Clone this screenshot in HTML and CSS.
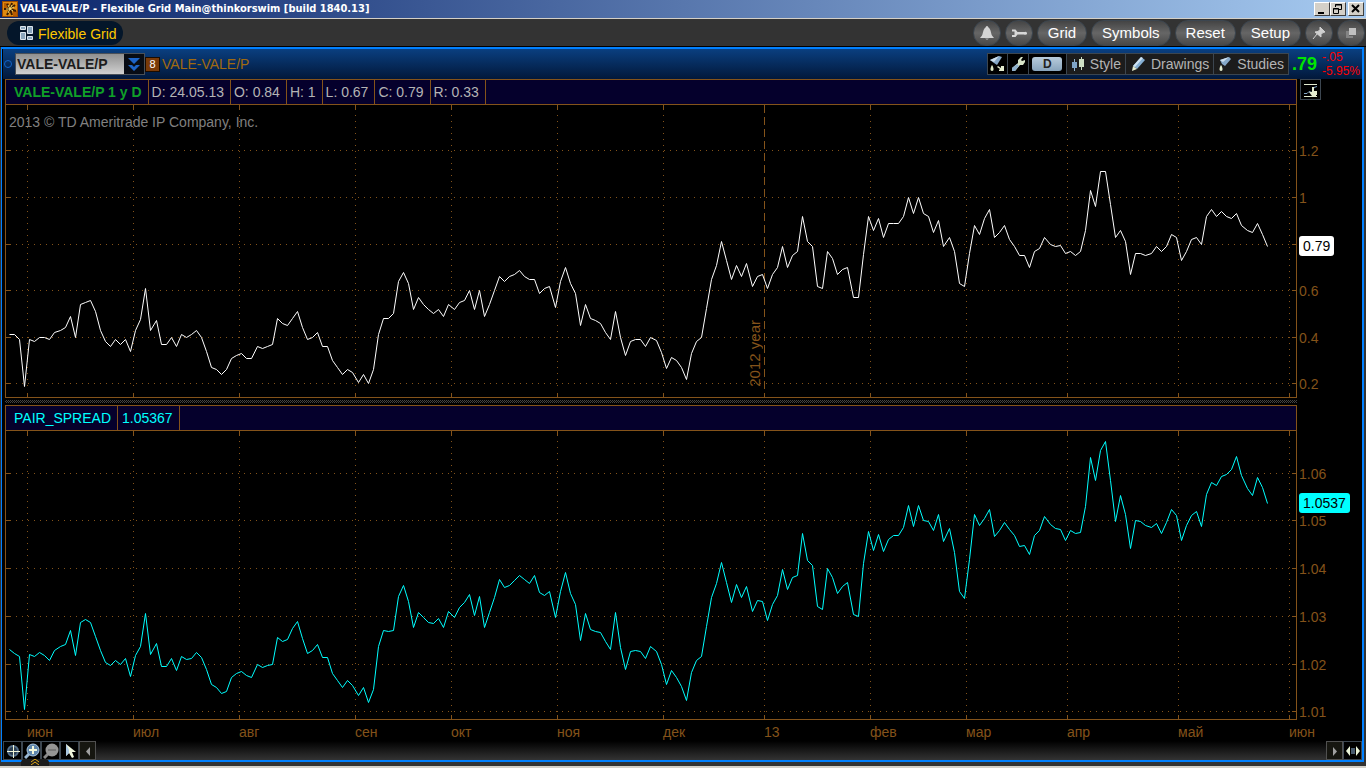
FILE: index.html
```
<!DOCTYPE html>
<html lang="en">
<head>
<meta charset="utf-8">
<title>VALE-VALE/P - Flexible Grid</title>
<link rel="stylesheet" href="styles.css">
</head>
<body>
<header class="titlebar">
  <svg class="app-icon" viewBox="0 0 16 16" width="16" height="16" aria-hidden="true"><rect width="16" height="16" fill="#9a4a00"/><rect x="1" y="1" width="14" height="14" fill="#e08a10"/><path d="M2 2h5v5H2zM11 10h4v5h-4z" fill="#b85c00"/><path d="M8 8L5 3M8 8l2-6M8 8l5-4M8 8l6 2M8 8l2 6M8 8l-3 6M8 8H2" stroke="#3a1c00" stroke-width="2"/><path d="M8 8L6 4M8 8l2-4M8 8l4-2M8 8l3 2M8 8l-2 4M8 8H4" stroke="#ffe070"/></svg>
  <h1 class="title">VALE-VALE/P - Flexible Grid Main@thinkorswim [build 1840.13]</h1>
  <div class="window-buttons">
    <button class="win" aria-label="Minimize"><svg viewBox="0 0 14 12" width="14" height="12"><path d="M3 9h6v2H3z"/></svg></button>
    <button class="win" aria-label="Restore"><svg viewBox="0 0 14 12" width="14" height="12"><path fill="none" stroke="#000" d="M4.500 4V1.500h6v5H8M4 2h7M2.500 5.500h5v5h-5zM2 6h6"/></svg></button>
    <button class="win win-close" aria-label="Close"><svg viewBox="0 0 14 12" width="14" height="12"><path fill="none" stroke="#000" stroke-width="2" d="M3 2l7 7M10 2l-7 7"/></svg></button>
  </div>
</header>

<nav class="toolbar">
  <button class="tab">
    <svg viewBox="0 0 14 15" width="14" height="15" aria-hidden="true"><g fill="#8ba6bd" stroke="#dce6ee"><path d="M.5.5h5v3h-5zM.5 6.500h5v7h-5zM7.500.5h5v7h-5zM7.500 10.500h5v3h-5z"/></g></svg>
    Flexible Grid
  </button>
  <div class="pills">
    <button class="pill round" aria-label="Alerts"><svg viewBox="0 0 16 16" width="16" height="16"><path d="M8 1c1 0 1 1 1.500 1.500C12 4 12 9 13 10.500l2 2.500H1l2-2.500C4 9 4 4 6.500 2.500 7 2 7 1 8 1z" fill="#d4d4d4"/><path d="M6 13.500h4L8 15z" fill="#aaa"/></svg></button>
    <button class="pill round" aria-label="Tools"><svg viewBox="0 0 18 10" width="18" height="10"><path d="M2 1.500h3.500L7.500 4H15v2.500H7.500L5.500 9H2V7h2.500V3.500H2z" fill="#d8d8d8"/><circle cx="15.500" cy="5.200" r="1.500" fill="#d8d8d8"/></svg></button>
    <button class="pill">Grid</button>
    <button class="pill">Symbols</button>
    <button class="pill">Reset</button>
    <button class="pill">Setup</button>
    <button class="pill round" aria-label="Pin"><svg viewBox="0 0 14 14" width="14" height="14"><path d="M8 1l5 5-2 .5-2 2v2.500L3 6l3-.5 2-2zM5 8L1 13" fill="#d0d0d0" stroke="#d0d0d0"/></svg></button>
    <button class="pill round" aria-label="Detach"><svg viewBox="0 0 12 12" width="12" height="12"><path d="M1 4v7h7V9H4V4z" fill="#848484"/><path d="M4 1h7v7H4z" fill="#c0c0c0"/></svg></button>
  </div>
</nav>

<main class="gadget">
  <div class="symbol-bar">
    <span class="link-dot"></span>
    <div class="combo">
      <input class="symbol" aria-label="Symbol" value="VALE-VALE/P">
      <button class="combo-arrow" aria-label="Symbol list"><svg viewBox="0 0 14 14" width="14" height="14"><path d="M1 1h12L7 7zM1 8h4l2 2 2-2h4l-6 6z" fill="#1d64c8"/></svg></button>
    </div>
    <button class="link-color">8</button>
    <span class="company">VALE-VALE/P</span>
    <div class="tools">
      <button class="tool" aria-label="Share"><svg viewBox="0 0 18 18" width="18" height="18"><path d="M2 5l9-4 3 1-5 8-3-2z" fill="#86a8c8"/><path d="M2 5l9-4-5 6z" fill="#cfe0ee"/><path d="M4 10c2 3 2 6 0 6s-2-3 0-6z" fill="#dde8c8"/><path d="M10 11l3 2v-2h3v5h-5v-1l1-1-3-2z" fill="#e4ecd0"/></svg></button>
      <button class="tool" aria-label="Settings"><svg viewBox="0 0 18 18" width="18" height="18"><path d="M12 2h2l-2 3 1 1 3-1v2l-2 3h-3l-5 6H3v-3l6-5V5z" fill="#d8e4c8"/><path d="M8 9l-5 4v3h3l4-5z" fill="#8fb0cc"/></svg></button>
      <button class="tool interval"><b>D</b></button>
      <button class="tool wide"><svg viewBox="0 0 14 16" width="14" height="16" aria-hidden="true"><path d="M3.500 3v12" stroke="#8fb0cc"/><path d="M1 6h5v6H1z" fill="#7fa4c6"/><path d="M10.500 1v13" stroke="#c9dcc0"/><path d="M8 3h5v8H8z" fill="#cfe0c4"/></svg>Style</button>
      <button class="tool wide"><svg viewBox="0 0 16 16" width="16" height="16" aria-hidden="true"><path d="M11 1l4 3-8 9-4-3z" fill="#86b0d4"/><path d="M11 1l2 1-8 9-2-1z" fill="#cfe4f4"/><path d="M3 10l4 3-5 2z" fill="#e4ecd0"/></svg>Drawings</button>
      <button class="tool wide"><svg viewBox="0 0 14 16" width="14" height="16" aria-hidden="true"><path d="M2 4l9-3 2 2-6 7-3-2z" fill="#86a8c8"/><path d="M2 4l9-3-6 5z" fill="#cfe0ee"/><path d="M3 9c2 3 2 6 0 6s-2-3 0-6z" fill="#e4ecd0"/></svg>Studies</button>
    </div>
    <span class="last">.79</span>
    <span class="change"><span>-.05</span><span>-5.95%</span></span>
  </div>

  <section class="pane price" data-chart="price">
    <div class="pane-head">
      <span class="cell name">VALE-VALE/P 1 y D</span><span class="cell">D: 24.05.13</span><span class="cell">O: 0.84</span><span class="cell">H: 1</span><span class="cell">L: 0.67</span><span class="cell">C: 0.79</span><span class="cell">R: 0.33</span>
    </div>
    <div class="axis-head">
      <button class="tool" aria-label="Chart mode"><svg viewBox="0 0 18 18" width="18" height="18"><path d="M2 3.500h13M2 15.500h13" stroke="#e4ecd0"/><path d="M2 12.500h3l2-2 3 1 2-5 3-1" stroke="#86a8c8" fill="none"/><path d="M10 6h2v4h3v4h-1v1h-4l-3-4h3z" fill="#e4ecd0"/></svg></button>
    </div>
    <div class="plot">
      <svg class="canvas" viewBox="6 105 1290 292" preserveAspectRatio="none" role="img" aria-label="Price"></svg>
      <span class="copyright">2013 © TD Ameritrade IP Company, Inc.</span>
      <span class="year">2012 year</span>
    </div>
    <div class="axis"></div>
  </section>

  <div class="splitter"></div>

  <section class="pane spread" data-chart="spread">
    <div class="pane-head">
      <span class="cell">PAIR_SPREAD</span><span class="cell">1.05367</span>
    </div>
    <div class="axis-head"></div>
    <div class="plot">
      <svg class="canvas" viewBox="6 431 1290 288" preserveAspectRatio="none" role="img" aria-label="Pair spread"></svg>
    </div>
    <div class="axis"></div>
  </section>

  <div class="months"></div>

  <div class="bottom-bar">
    <button class="tool" aria-label="Crosshair"><svg viewBox="0 0 16 16" width="16" height="16"><circle cx="8" cy="8" r="5" fill="#2c3e50" stroke="#56708a" stroke-width="2"/><path d="M8.500 2v13M2 8.500h13" stroke="#f0f4d8"/></svg></button>
    <button class="tool" aria-label="Zoom in"><svg viewBox="0 0 16 16" width="16" height="16"><path d="M1 15l4-4" stroke="#9ab8d4" stroke-width="3"/><circle cx="9" cy="7" r="6" fill="#5f86ac" stroke="#a9c6e0"/><path d="M9 3v8M5 7h8" stroke="#f4f8dc" stroke-width="2"/></svg></button>
    <button class="tool" aria-label="Zoom out" disabled><svg viewBox="0 0 16 16" width="16" height="16"><path d="M1 15l4-4" stroke="#888" stroke-width="3"/><circle cx="9" cy="7" r="6.500" fill="#959595"/><path d="M5 7h8" stroke="#777" stroke-width="2"/></svg></button>
    <button class="tool" aria-label="Pointer"><svg viewBox="0 0 16 16" width="16" height="16"><path d="M4 1v12l3-3 3 5 2-1-2-5h4z" fill="#eef4dc"/><path d="M4 1v12l3-3V7z" fill="#a9c6e0"/></svg></button>
    <button class="tool arrow" aria-label="Scroll left"><svg viewBox="0 0 10 10" width="10" height="10"><path d="M7 1v9L3 5.500z" fill="#a0a0a0"/></svg></button>
    <button class="tool arrow push" aria-label="Scroll right"><svg viewBox="0 0 10 10" width="10" height="10"><path d="M3 1v9l4-4.500z" fill="#a0a0a0"/></svg></button>
    <button class="tool" aria-label="Fit"><svg viewBox="0 0 16 16" width="16" height="16"><path d="M5 3v10L1 8zM11 3v10l4-5z" fill="#eaf4d8"/><path d="M7 5v6M9 5v6" stroke="#8fb4dc"/></svg></button>
    <button class="drawer" aria-label="Open drawer"><svg viewBox="0 0 10 6" width="10" height="6"><path d="M1 3l4-3 4 3M1 6l4-3 4 3" fill="none" stroke="#e0a818"/></svg></button>
  </div>
</main>
<script src="chart.js"></script>
</body>
</html>
```
FILE: styles.css
```
* { box-sizing: border-box; }

html, body { height: 100%; }

body {
  margin: 0;
  display: flex;
  flex-direction: column;
  background: #333;
  border-bottom: 2px solid #d4d0c8;
  color: #b4b4b4;
  font: 14px/16px "Liberation Sans", Arial, sans-serif;
  overflow: hidden;
}

button {
  margin: 0;
  padding: 0;
  border: 0;
  font: inherit;
  color: inherit;
  background: none;
}

svg { display: block; flex: none; }

/* Window title */
.titlebar {
  flex: none;
  display: flex;
  align-items: center;
  height: 19px;
  padding: 0 2px;
  background: linear-gradient(90deg, #0a246a, #a6caf0);
  border-bottom: 1px solid #d4d0c8;
}
.title {
  margin: 0 auto 0 2px;
  color: #fff;
  font: bold 11px/16px "DejaVu Sans Condensed", Tahoma, sans-serif;
  white-space: nowrap;
}
.window-buttons { display: flex; }
.win {
  width: 16px;
  height: 14px;
  background: #d4d0c8;
  border: 1px solid;
  border-color: #fff #404040 #404040 #fff;
}
.win-close { margin-left: 2px; }

/* Main toolbar */
.toolbar {
  flex: none;
  display: flex;
  align-items: center;
  justify-content: space-between;
  height: 28px;
  padding: 0 1px 0 7px;
  background: #333;
  border-bottom: 1px solid #000;
}
.tab {
  display: flex;
  align-items: center;
  gap: 4px;
  height: 24px;
  padding: 2px 6px 0 13px;
  border-radius: 12px;
  background: #04162a;
  color: #ffc800;
}
.pills { display: flex; gap: 4px; }
.pill {
  display: flex;
  align-items: center;
  justify-content: center;
  height: 26px;
  padding: 0 10px;
  border: 1px solid #3c4650;
  border-radius: 13px;
  background: linear-gradient(#444, #666 50%, #484848);
  color: #fff;
  font-size: 15px;
}
.round { width: 28px; padding: 0; }

/* Gadget frame */
.gadget {
  flex: 1;
  min-height: 0;
  display: flex;
  flex-direction: column;
  margin: 0 2px 4px 1px;
  padding-left: 1px;
  border: 2px solid #0080ff;
  border-left-width: 1px;
  background: #000;
}
.symbol-bar {
  flex: none;
  display: flex;
  align-items: center;
  height: 30px;
  background: linear-gradient(#0a3f80, #02183a);
}
.link-dot {
  width: 8px;
  height: 8px;
  margin: 0 3px 0 1px;
  border: 1px solid #1464c8;
  border-radius: 50%;
}
.combo {
  display: flex;
  width: 130px;
  height: 22px;
  border: 1px solid #4a5058;
}
.symbol {
  flex: 1;
  min-width: 0;
  padding: 0 1px;
  border: 0;
  background: linear-gradient(#909090, #d0d0d0);
  color: #1c1c1c;
  font: bold 14px/20px "Liberation Sans", Arial, sans-serif;
}
.combo-arrow { width: 20px; padding-left: 3px; background: #080c14; }
.link-color {
  width: 15px;
  height: 15px;
  border: 1px solid #1c0c00;
  background: #7a3a08;
  color: #fff;
  font-size: 11px;
  line-height: 13px;
}
.company { margin-left: 2px; color: #a06a10; }
.tools { display: flex; margin-left: auto; }
.tool {
  display: flex;
  align-items: center;
  justify-content: center;
  width: 21px;
  height: 22px;
  border: 1px solid #3c4650;
  background: #000;
}
.tools .tool + .tool { border-left-width: 0; }
.tools .interval { width: 38px; }
.interval b {
  width: 30px;
  border-radius: 3px;
  background: linear-gradient(#b8ccdc, #88a4bc);
  color: #222;
  font-size: 12px;
  line-height: 14px;
}
.tools .wide {
  width: auto;
  gap: 5px;
  padding: 0 4px;
  background: #1c1c1c;
}
.last {
  width: 30px;
  margin-left: 3px;
  color: #00e600;
  font: bold 18px/20px "Liberation Sans", Arial, sans-serif;
}
.change {
  display: flex;
  flex-direction: column;
  width: 40px;
  color: #f00;
  font-size: 12px;
  line-height: 14px;
}

/* Chart panes */
.pane {
  display: grid;
  grid-template: 26px minmax(0, 1fr) / minmax(0, 1fr) 65px;
  min-height: 0;
  margin-left: 2px;
}
.price { flex: 319 1 0; }
.spread { flex: 315 1 0; }
.pane-head {
  display: flex;
  padding-left: 4px;
  border: 1px solid #84531a;
  background: #05002c;
}
.cell {
  padding: 4px 6px 0 4px;
  border-right: 1px solid #84531a;
  white-space: nowrap;
}
.price .cell + .cell { padding-left: 3px; }
.name { color: #10a028; font-weight: bold; }
.spread .cell { color: #0ff; }
.axis-head { padding-left: 3px; }
.axis-head .tool { height: 21px; }
.plot {
  position: relative;
  border: 1px solid #84531a;
  border-top: 0;
}
.canvas { width: 100%; height: 100%; }
.canvas line, .canvas polyline { vector-effect: non-scaling-stroke; fill: none; }
.canvas line { stroke: #84531a; shape-rendering: crispEdges; }
.grid-line { stroke-dasharray: 1 5; }
.year-line { stroke-dasharray: 8 4; }
.price polyline { stroke: #fff; }
.spread polyline { stroke: #0ff; }
.copyright { position: absolute; left: 3px; top: 9px; color: #808080; }
.year {
  position: absolute;
  right: 41.3%;
  bottom: 10px;
  color: #84531a;
  font-size: 15px;
  writing-mode: vertical-rl;
  rotate: 180deg;
}
.axis { position: relative; color: #84531a; }
.axis span {
  position: absolute;
  left: 2px;
  translate: 0 -50%;
}
.axis .tag {
  padding: 2px 4px;
  border-radius: 3px;
  background: #fff;
  color: #000;
}
.spread .axis .tag { background: #0ff; }
.splitter {
  flex: none;
  height: 7px;
  margin: 0 65px 0 2px;
  background: repeating-conic-gradient(#444 0 25%, #000 0 50%) 0 0 / 2px 2px;
  border: solid #000;
  border-width: 2px 0;
}
.months {
  position: relative;
  flex: none;
  height: 21px;
  margin: 0 66px 0 3px;
  color: #84531a;
}
.months span { position: absolute; top: 4px; }

/* Bottom bar */
.bottom-bar {
  position: relative;
  flex: none;
  display: flex;
  height: 19px;
  background: linear-gradient(#000, #333);
}
.bottom-bar .tool { width: 19px; height: 19px; }
.bottom-bar .arrow { width: 17px; background: #161610; border-color: #505050; }
.bottom-bar .push { margin-left: auto; }
.drawer {
  position: absolute;
  left: 18px;
  bottom: -6px;
  display: flex;
  justify-content: center;
  width: 28px;
  height: 7px;
  border-radius: 4px 4px 0 0;
  background: #1c1c1c;
}
```
FILE: chart.js
```
const NS = "http://www.w3.org/2000/svg";

// Trading days: start of each run and its number of bars, 5 units apart.
const runs = [[9, 10], [60, 19], [156, 20], [257, 20], [358, 19], [454, 20], [555, 20], [656, 19],
  [752, 20], [853, 19], [949, 20], [1050, 20], [1151, 19], [1247, 5]];
const xs = runs.flatMap(([start, count]) => Array.from({ length: count }, (_, i) => start + i * 5));

const months = [[27, "июн"], [133, "июл"], [239, "авг"], [355, "сен"], [451, "окт"], [557, "ноя"], [663, "дек"],
  [764, "13"], [870, "фев"], [966, "мар"], [1067, "апр"], [1178, "май"], [1289, "июн"]];

const charts = {
  price: {
    top: 105, height: 292,
    levels: [[150, "1.2"], [197, "1"], [244, ""], [290, "0.6"], [337, "0.4"], [383, "0.2"]],
    tag: [246, "0.79"],
    yearAt: 764,
    ys: [334,334,339,386,339,341,337,337,339,332,
      330,327,316,337,304,302,300,311,330,341,346,339,344,339,351,330,319,288,330,
      320,344,344,337,346,334,337,334,330,337,351,367,369,374,369,358,355,353,358,358,
      346,348,346,344,318,323,325,318,311,327,339,337,332,346,346,360,367,374,369,372,
      382,374,383,369,334,318,318,313,281,272,283,309,297,304,309,313,309,316,304,
      309,302,300,290,309,290,316,304,290,276,281,276,274,270,276,279,279,293,288,286,
      307,281,267,283,293,325,304,318,320,323,332,339,311,337,355,341,339,339,346,337,
      340,352,368,357,360,367,379,353,341,337,308,279,265,241,260,279,265,276,263,
      286,276,274,288,274,267,246,267,255,251,216,241,246,286,288,251,258,274,269,267,
      297,297,254,216,230,218,237,223,223,223,216,197,213,197,213,216,232,220,246,
      237,251,283,286,253,225,234,218,209,237,232,225,239,246,255,255,267,251,248,237,
      244,246,245,253,251,255,251,230,190,206,171,171,204,237,230,241,274,253,253,255,
      253,246,251,246,234,237,260,251,239,237,244,216,209,216,211,216,218,213,225,
      230,232,223,234,246]
  },
  spread: {
    top: 431, height: 288,
    levels: [[473, "1.06"], [520, "1.05"], [568, "1.04"], [616, "1.03"], [664, "1.02"], [711, "1.01"]],
    tag: [503, "1.0537"],
    ys: [649,653,656,709,654,656,652,655,660,650,
      646,644,630,655,622,619,622,636,650,662,665,660,664,658,676,655,646,613,654,
      643,666,666,658,670,656,659,658,652,657,669,684,687,693,691,677,673,671,675,677,
      664,667,665,664,637,641,639,628,621,638,653,650,644,657,657,673,680,687,680,685,
      695,687,702,689,646,630,631,630,596,585,601,627,612,617,622,623,618,627,611,
      617,607,602,594,615,596,627,612,597,579,587,585,580,575,579,583,575,592,595,591,
      617,591,572,593,604,640,613,629,631,632,641,649,612,647,669,651,650,651,658,646,
      651,664,684,670,677,686,700,672,660,656,626,597,583,562,582,602,584,597,586,
      611,600,601,620,604,595,569,589,577,575,533,560,565,606,609,568,577,593,586,582,
      614,616,563,531,550,534,551,539,535,535,527,505,526,505,520,521,530,514,541,
      528,552,591,598,559,514,525,518,509,536,530,522,529,535,546,545,554,535,530,516,
      524,528,529,540,530,533,532,506,457,480,450,441,480,521,495,514,548,520,521,525,
      527,523,533,522,509,515,540,525,515,511,526,494,482,485,476,474,469,456,475,
      488,495,477,487,503]
  }
};

function addLine(svg, x1, y1, x2, y2, cls) {
  const el = document.createElementNS(NS, "line");
  Object.entries({ x1, y1, x2, y2, class: cls || "tick" }).forEach(([k, v]) => el.setAttribute(k, v));
  svg.append(el);
}

function addLabel(parent, text, side, share, cls) {
  const el = document.createElement("span");
  el.textContent = text;
  el.style[side] = share * 100 + "%";
  if (cls) el.className = cls;
  parent.append(el);
}

document.querySelectorAll("[data-chart]").forEach(pane => {
  const c = charts[pane.dataset.chart];
  const svg = pane.querySelector(".canvas");
  const axis = pane.querySelector(".axis");
  const bottom = c.top + c.height;

  months.forEach(([x]) => {
    const mid = x + 0.5;
    addLine(svg, mid, c.top, mid, c.top + 5);
    addLine(svg, mid, bottom - 4, mid, bottom);
    if (x === c.yearAt) addLine(svg, mid, c.top, mid, bottom, "year-line");
    else addLine(svg, mid, c.top + 10, mid, bottom - 6, "grid-line");
  });
  c.levels.forEach(([y, text]) => {
    const mid = y + 0.5;
    addLine(svg, 6, mid, 11, mid);
    addLine(svg, 1292, mid, 1296, mid);
    addLine(svg, 16, mid, 1290, mid, "grid-line");
    if (text) addLabel(axis, text, "top", (y + 1 - c.top) / (c.height + 1));
  });
  addLabel(axis, c.tag[1], "top", (c.tag[0] - c.top) / (c.height + 1), "tag");

  const curve = document.createElementNS(NS, "polyline");
  curve.setAttribute("points", xs.map((x, i) => `${x + 0.5},${c.ys[i] + 0.5}`).join(" "));
  svg.append(curve);
});

const monthRow = document.querySelector(".months");
months.forEach(([x, text]) => addLabel(monthRow, text, "left", (x - 6) / 1290));
```
